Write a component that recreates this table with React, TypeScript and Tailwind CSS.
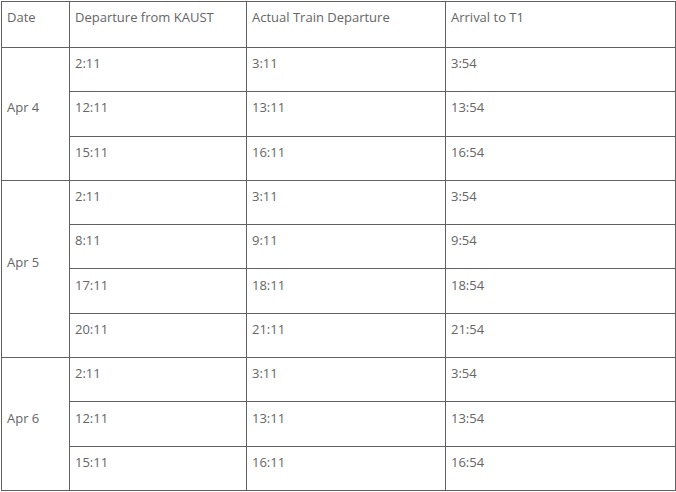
const days = [
  {
    date: 'Apr 4',
    rows: [
      ['2:11', '3:11', '3:54'],
      ['12:11', '13:11', '13:54'],
      ['15:11', '16:11', '16:54'],
    ],
  },
  {
    date: 'Apr 5',
    rows: [
      ['2:11', '3:11', '3:54'],
      ['8:11', '9:11', '9:54'],
      ['17:11', '18:11', '18:54'],
      ['20:11', '21:11', '21:54'],
    ],
  },
  {
    date: 'Apr 6',
    rows: [
      ['2:11', '3:11', '3:54'],
      ['12:11', '13:11', '13:54'],
      ['15:11', '16:11', '16:54'],
    ],
  },
]

const cell = 'border border-[#616161] px-[5px] pt-[5px] pb-[18px] align-middle'

export default function App() {
  return (
    <div className="bg-white w-[676px] h-[492px] pl-px pt-px font-['Open_Sans',sans-serif] text-[13px] leading-5 text-[#666666]">
      <table className="border-collapse table-fixed w-[674px]">
        <colgroup>
          <col className="w-[68px]" />
          <col className="w-[177px]" />
          <col className="w-[199px]" />
          <col className="w-[230px]" />
        </colgroup>
        <thead>
          <tr className="h-[46px]">
            <th className={`${cell} text-left font-normal align-top`}>Date</th>
            <th className={`${cell} text-left font-normal align-top`}>Departure from KAUST</th>
            <th className={`${cell} text-left font-normal align-top`}>Actual Train Departure</th>
            <th className={`${cell} text-left font-normal align-top`}>Arrival to T1</th>
          </tr>
        </thead>
        <tbody>
          {days.map((d) =>
            d.rows.map((r, i) => (
              <tr key={d.date + i} className="h-[44.3px]">
                {i === 0 && (
                  <td rowSpan={d.rows.length} className={cell}>
                    {d.date}
                  </td>
                )}
                {r.map((t, j) => (
                  <td key={j} className={cell}>
                    {t}
                  </td>
                ))}
              </tr>
            ))
          )}
        </tbody>
      </table>
    </div>
  )
}
